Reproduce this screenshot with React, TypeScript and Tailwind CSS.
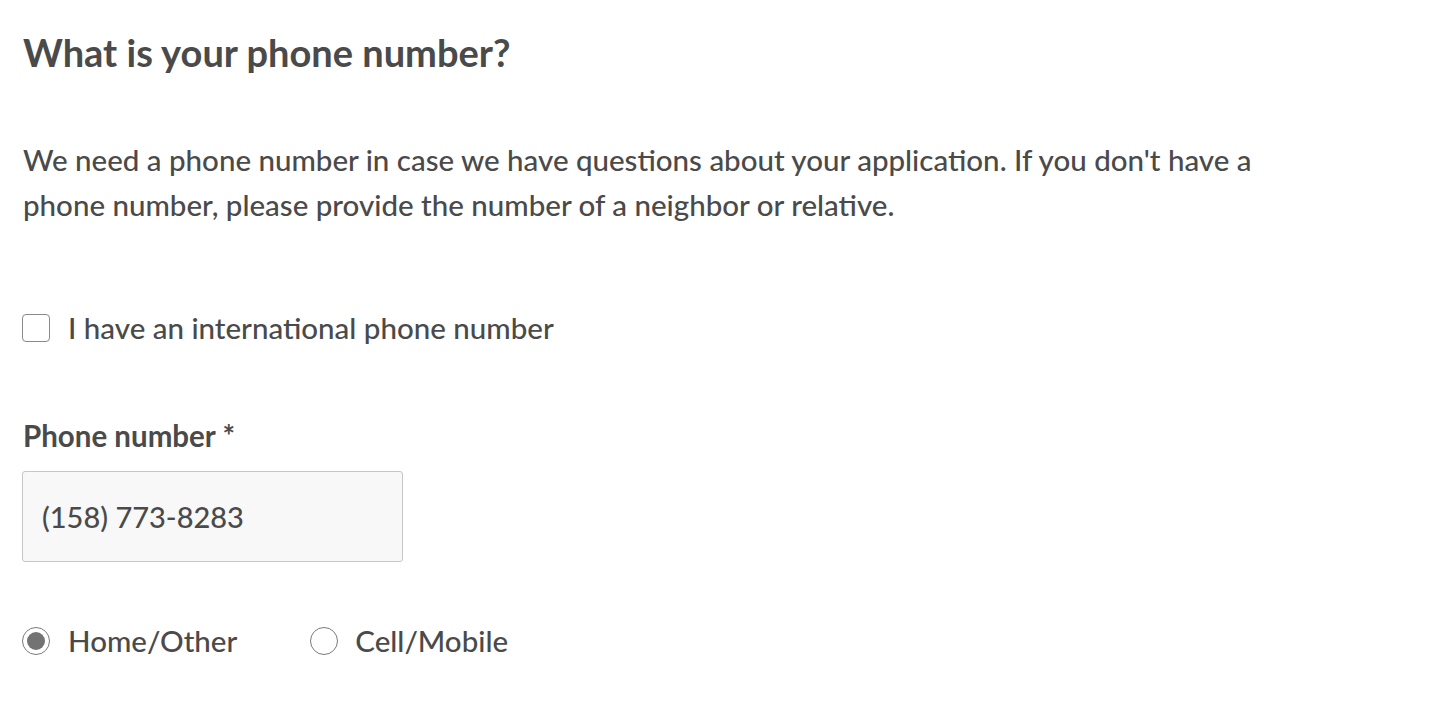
import { useState } from 'react';

export default function App() {
  const [intl, setIntl] = useState(false);
  const [kind, setKind] = useState<'home' | 'cell'>('home');

  return (
    <div
      className="min-h-screen bg-white text-[#4a4a4a] px-[22px] pt-[27px]"
      style={{ fontFamily: 'Lato, "Open Sans", sans-serif' }}
    >
      <h1 className="pl-px text-[38px] font-bold leading-[50px]">What is your phone number?</h1>

      <p className="mt-[60px] pl-px text-[29.5px] font-medium leading-[45px] max-w-[1262px]">
        We need a phone number in case we have questions about your application. If you don't have a phone
        number, please provide the number of a neighbor or relative.
      </p>

      <label className="mt-[84px] flex items-center gap-[18px] text-[29.5px] font-medium leading-[34px] cursor-pointer w-fit">
        <span
          onClick={() => setIntl(!intl)}
          className="w-[28px] h-[28px] rounded-[4px] border border-[#8a8a8a] bg-white"
        />
        I have an international phone number
      </label>

      <div className="mt-[74px] pl-px text-[29.5px] font-bold leading-[34px]">Phone number *</div>

      <div className="mt-[18px] w-[381px] h-[91px] bg-[#f8f8f8] border border-[#c6c6c6] rounded-[3px] flex items-center px-[19px] text-[29px] font-medium">
        (158) 773-8283
      </div>

      <div className="mt-[62px] flex items-center text-[29.5px] font-medium leading-[34px]">
        <button onClick={() => setKind('home')} className="flex items-center gap-[18px] mr-[73px]">
          <span className="w-[28px] h-[28px] rounded-full border border-[#7a7a7a] flex items-center justify-center">
            {kind === 'home' && <span className="w-[18px] h-[18px] rounded-full bg-[#737373]" />}
          </span>
          Home/Other
        </button>
        <button onClick={() => setKind('cell')} className="flex items-center gap-[17px]">
          <span className="w-[28px] h-[28px] rounded-full border border-[#7a7a7a] flex items-center justify-center">
            {kind === 'cell' && <span className="w-[18px] h-[18px] rounded-full bg-[#737373]" />}
          </span>
          Cell/Mobile
        </button>
      </div>
    </div>
  );
}
